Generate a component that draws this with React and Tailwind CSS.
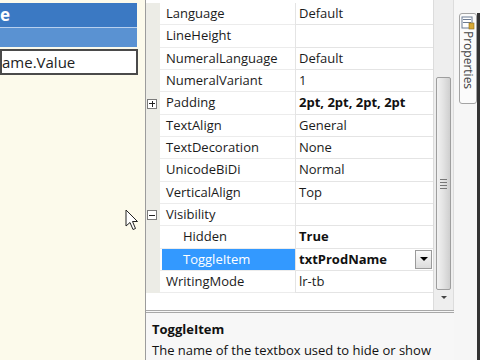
const rows = [
  { n: "Language", v: "Default" },
  { n: "LineHeight", v: "" },
  { n: "NumeralLanguage", v: "Default" },
  { n: "NumeralVariant", v: "1" },
  { n: "Padding", v: "2pt, 2pt, 2pt, 2pt", bold: true, exp: "plus" },
  { n: "TextAlign", v: "General" },
  { n: "TextDecoration", v: "None" },
  { n: "UnicodeBiDi", v: "Normal" },
  { n: "VerticalAlign", v: "Top" },
  { n: "Visibility", v: "", exp: "minus" },
  { n: "Hidden", v: "True", bold: true, indent: true },
  { n: "ToggleItem", v: "txtProdName", bold: true, indent: true, selected: true, dropdown: true },
  { n: "WritingMode", v: "lr-tb" },
];

function Expander({ type }) {
  return (
    <div className="w-[10px] h-[10px] border border-[#7a7a7a] bg-white relative">
      <div className="absolute left-[1px] right-[1px] top-[3.5px] h-[1px] bg-[#222]" />
      {type === "plus" && <div className="absolute top-[1px] bottom-[1px] left-[3.5px] w-[1px] bg-[#222]" />}
    </div>
  );
}

function Row({ row }) {
  return (
    <div className="flex h-[22.35px] shrink-0">
      <div className="w-[14px] bg-[#ecece6] flex items-center pl-[1px]">
        {row.exp && <Expander type={row.exp} />}
      </div>
      <div className="w-[135px] border-b border-[#ececec] pl-[2px] flex items-stretch">
        <div
          className={
            "flex-1 flex items-center " +
            (row.indent ? "pl-[21px] " : "pl-[4px] ") +
            (row.selected ? "bg-[#3399ff] text-white" : "text-[#1b1b1b]")
          }
        >
          {row.n}
        </div>
      </div>
      <div className="w-[138px] border-l border-b border-[#e4e4e4] pl-[3px] flex items-center justify-between pr-[1px]">
        <span className={row.bold ? "font-bold text-[#111]" : "text-[#1b1b1b]"}>{row.v}</span>
        {row.dropdown && (
          <div className="w-[17px] h-[19px] border border-[#9a9a9a] bg-gradient-to-b from-[#fafafa] to-[#dcdcdc] flex items-center justify-center">
            <div className="w-0 h-0 border-l-[4px] border-r-[4px] border-t-[4px] border-l-transparent border-r-transparent border-t-black" />
          </div>
        )}
      </div>
    </div>
  );
}

export default function App() {
  return (
    <div
      className="relative w-[480px] h-[360px] flex overflow-hidden bg-white text-[13px]"
      style={{ fontFamily: '"Open Sans", "Noto Sans", sans-serif' }}
    >
      {/* left designer panel */}
      <div className="w-[146px] bg-[#fcfaeb] flex flex-col pt-[3px]">
        <div className="h-[24px] w-[137px] bg-[#3b79c3] text-white font-bold text-[17px] leading-[24px]">e</div>
        <div className="h-[1px] w-[137px] bg-[#b8d0ee]" />
        <div className="h-[19px] w-[137px] bg-[#5a92d2]" />
        <div className="mt-[2px] h-[26px] w-[138px] border-2 border-[#4a4a4a] bg-white text-[15px] leading-[22px] text-[#222]">
          ame.Value
        </div>
      </div>

      {/* properties */}
      <div className="w-[309px] border-l border-[#9c9c9c] flex flex-col">
        <div className="h-[310px] flex">
          <div className="w-[287px] flex flex-col pt-[3px]">
            {rows.map((r) => (
              <Row key={r.n} row={r} />
            ))}
          </div>
          <div className="w-[21px] bg-[#eeeeee] border-l border-r border-[#dcdcdc] flex flex-col items-center">
            <div className="h-[77px]" />
            <div className="w-[15px] h-[213px] rounded-[2px] border border-[#9e9e9e] bg-gradient-to-r from-[#f2f2f2] via-[#e2e2e2] to-[#cfcfcf] flex flex-col items-center justify-center gap-[2px]">
              <div className="w-[7px] h-[1px] bg-[#777]" />
              <div className="w-[7px] h-[1px] bg-[#777]" />
              <div className="w-[7px] h-[1px] bg-[#777]" />
              <div className="w-[7px] h-[1px] bg-[#777]" />
            </div>
            <div className="mt-[6px] w-0 h-0 border-l-[3px] border-r-[3px] border-t-[3px] border-l-transparent border-r-transparent border-t-[#444]" />
          </div>
        </div>
        <div className="h-[50px] border-t-[3px] border-double border-[#a8a8a8] bg-[#f7f7f7] pl-[6px] pt-[6px] text-[#111] leading-[21px]">
          <div className="font-bold">ToggleItem</div>
          <div>The name of the textbox used to hide or show</div>
        </div>
      </div>

      {/* side tab strip */}
      <div className="flex-1 bg-[#f6f6f6] flex pt-[13px] pl-[5px]">
        <div className="w-[18px] h-[91px] border border-[#a4a4a4] rounded-[3px] bg-[#fbfbfb] flex flex-col items-center pt-[2px]">
          <svg width="14" height="14" viewBox="0 0 14 14">
            <rect x="1" y="1" width="10" height="11" fill="#fff" stroke="#6d7c93" />
            <rect x="2" y="3" width="8" height="1" fill="#6d7c93" />
            <rect x="2" y="6" width="8" height="1" fill="#6d7c93" />
            <rect x="8" y="7" width="5" height="6" fill="#d8a935" stroke="#8a6a1a" strokeWidth="0.6" />
          </svg>
          <span className="[writing-mode:vertical-rl] text-[12px] leading-[16px] text-[#444] mt-[1px]">Properties</span>
        </div>
        <div className="ml-auto w-[3px] bg-[#333]" />
      </div>

      {/* mouse cursor */}
      <svg className="absolute left-[125px] top-[209px]" width="14" height="22" viewBox="0 0 14 22">
        <path d="M1 1 L1 17 L5 13.5 L8 20.5 L10.5 19.5 L7.5 12.5 L12.5 12.5 Z" fill="#fff" stroke="#222" strokeWidth="1" strokeLinejoin="round" />
      </svg>
    </div>
  );
}
